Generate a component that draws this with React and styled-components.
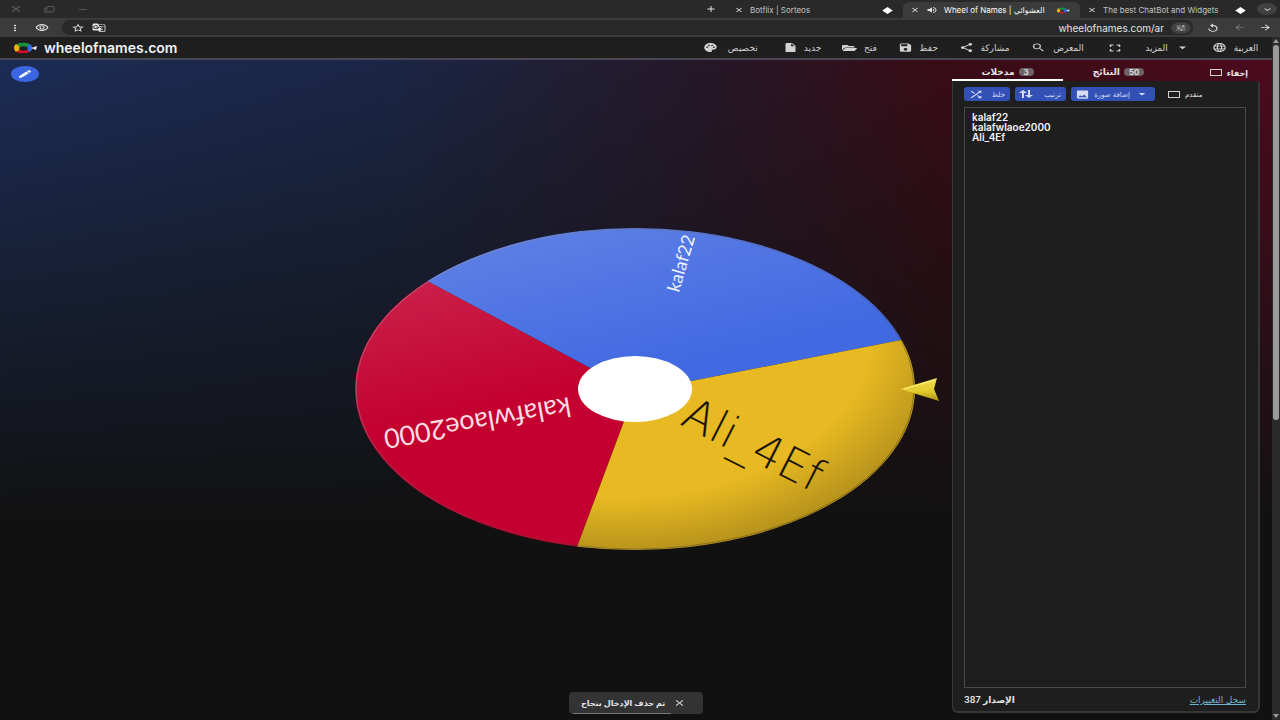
import { useState } from "react";
import styled, { createGlobalStyle } from "styled-components";
import { FaFolderOpen } from "react-icons/fa";
import {
    MdAdd, MdArrowBack, MdArrowDropDown, MdArrowForward, MdClose, MdEdit, MdFullscreen, MdGTranslate,
    MdImage, MdInsertDriveFile, MdKeyboardArrowDown, MdLanguage, MdMoreVert, MdOutlineRemoveRedEye,
    MdPalette, MdReplay, MdSave, MdSearch, MdShare, MdShuffle, MdStarBorder, MdTune,
    MdVolumeUp, MdFilterNone, MdRemove,
} from "react-icons/md";

const menu = [
    { icon: MdPalette, text: "تخصيص", width: 38 },
    { icon: MdInsertDriveFile, text: "جديد", width: 17 },
    { icon: FaFolderOpen, text: "فتح", width: 14 },
    { icon: MdSave, text: "حفظ", width: 17 },
    { icon: MdShare, text: "مشاركة", width: 30 },
    { icon: MdSearch, text: "المعرض", width: 33 },
];

// Alle Icons sind breiter als hoch
function Icon({ as: Shape, w = 15, h = 11 }) {
    return (
        <IconBox $w={w} $h={h}>
            <Shape preserveAspectRatio="none" aria-hidden="true" />
        </IconBox>
    );
}

function Logo({ w = 26, h = 12 }) {
    return (
        <svg width={w} height={h} viewBox="0 0 26 12" preserveAspectRatio="none" aria-hidden="true">
            <path d="M4 2 A12 6 0 0 1 18 2 L15 5 A6 3 0 0 0 8 5Z" fill="#16923f" />
            <path d="M4 2 A8 6 0 0 0 4 10 L8 8 A6 3 0 0 1 8 5Z" fill="#eeb211" />
            <path d="M4 10 A12 6 0 0 0 18 10 L15 8 A6 3 0 0 1 8 8Z" fill="#d50f25" />
            <path d="M18 2 A9 6 0 0 1 18 10 L15 8 A6 3 0 0 0 15 5Z" fill="#3369e8" />
            <path d="M19 6 L25 4 L24 8Z" fill="#dfe8ff" />
        </svg>
    );
}

function Diamond() {
    return (
        <svg width="11" height="7" viewBox="0 0 12 8" aria-hidden="true">
            <path d="M6 0 L12 4 L6 8 L0 4Z" fill="#fff" />
        </svg>
    );
}

function SortArrows() {
    return (
        <svg width="14" height="8" viewBox="0 0 14 8" aria-hidden="true">
            <path d="M4 0 L8 3 H5 V8 H3 V3 H0Z M10 8 L6 5 H9 V0 H11 V5 H14Z" fill="currentColor" />
        </svg>
    );
}

function Wheel() {
    return (
        <WheelSvg viewBox="328 219 616 340" role="img" aria-label="Wheel">
            <defs>
                <clipPath id="disc">
                    <ellipse cx="635" cy="388" rx="280" ry="161" />
                </clipPath>
                <linearGradient id="shine" x1="0.2" y1="0" x2="0.4" y2="0.5">
                    <stop offset="0" stopColor="#fff" stopOpacity="0.16" />
                    <stop offset="1" stopColor="#fff" stopOpacity="0" />
                </linearGradient>
                <radialGradient id="shade" gradientUnits="userSpaceOnUse" cx="0" cy="0" r="1" gradientTransform="translate(620 330) scale(340 225)">
                    <stop offset="0.74" stopColor="#000" stopOpacity="0" />
                    <stop offset="1" stopColor="#000" stopOpacity="0.22" />
                </radialGradient>
                <linearGradient id="rim" x1="0" y1="0.2" x2="1" y2="0.8">
                    <stop offset="0" stopColor="#a5a3b0" stopOpacity="0.6" />
                    <stop offset="0.5" stopColor="#555" stopOpacity="0.3" />
                    <stop offset="1" stopColor="#3a300c" stopOpacity="0.5" />
                </linearGradient>
                <linearGradient id="pin" x1="0" y1="0" x2="0" y2="1">
                    <stop offset="0" stopColor="#f4e04a" />
                    <stop offset="0.6" stopColor="#e2c92b" />
                    <stop offset="1" stopColor="#a88e14" />
                </linearGradient>
            </defs>
            <g clipPath="url(#disc)">
                <path d="M635 391 L901 339 L960 200 L300 200 L429 281Z" fill="#4169e1" />
                <path d="M635 391 L429 281 L300 200 L300 600 L560 600 L577 546Z" fill="#c3002f" />
                <path d="M635 391 L577 546 L560 600 L960 600 L960 327 L901 339Z" fill="#e7b922" />
                <ellipse cx="635" cy="388" rx="280" ry="161" fill="url(#shine)" />
                <path d="M635 391 L577 546 L560 600 L960 600 L960 327 L901 339Z" fill="url(#shade)" />
            </g>
            <ellipse cx="635" cy="388" rx="279" ry="160" fill="none" stroke="url(#rim)" strokeWidth="1" />
            <ellipse cx="635" cy="388" rx="57" ry="33" fill="#fff" />
            <WheelText fontSize="18" fill="#eef2ff" transform="translate(679 292) rotate(-74)">kalaf22</WheelText>
            <WheelText fontSize="27" fill="#ffdbe2" transform="translate(569 396) rotate(170)">kalafwlaoe2000</WheelText>
            <WheelText $light fontSize="45" fill="#1b1408" transform="translate(679 423) rotate(27)">Ali_4Ef</WheelText>
            <path d="M900 388 L937 377 L934 388 L939 400Z" fill="url(#pin)" />
            <path d="M904 388 L935 379" stroke="#fbf08a" fill="none" />
        </WheelSvg>
    );
}

export default function App() {
    const [entries, setEntries] = useState("kalaf22\nkalafwlaoe2000\nAli_4Ef");
    const [toast, setToast] = useState(true);

    return (
        <Window>
            <GlobalStyle />
            <TabStrip>
                <WindowControls>
                    <PlainButton aria-label="Close"><Icon as={MdClose} w={14} h={10} /></PlainButton>
                    <PlainButton aria-label="Restore"><Icon as={MdFilterNone} w={11} h={7} /></PlainButton>
                    <PlainButton aria-label="Minimize"><Icon as={MdRemove} w={14} h={9} /></PlainButton>
                </WindowControls>
                <PlainButton aria-label="New tab"><Icon as={MdAdd} w={12} h={10} /></PlainButton>
                <Tab $width={176} $line>
                    <Icon as={MdClose} w={10} h={8} />
                    <TabTitle>Botflix | Sorteos</TabTitle>
                    <Diamond />
                </Tab>
                <Tab $width={177} $active>
                    <Icon as={MdClose} w={10} h={8} />
                    <Icon as={MdVolumeUp} w={12} h={8} />
                    <TabTitle $active>Wheel of Names | العشوائي</TabTitle>
                    <Logo w={14} h={7} />
                </Tab>
                <Tab $width={176}>
                    <Icon as={MdClose} w={10} h={8} />
                    <TabTitle>The best ChatBot and Widgets</TabTitle>
                    <Diamond />
                </Tab>
                <RoundButton aria-label="Tabs" $end><Icon as={MdKeyboardArrowDown} w={13} h={9} /></RoundButton>
            </TabStrip>
            <BrowserBar>
                <PlainButton aria-label="Menu"><Icon as={MdMoreVert} w={14} h={10} /></PlainButton>
                <PlainButton aria-label="Incognito"><Icon as={MdOutlineRemoveRedEye} w={14} h={11} /></PlainButton>
                <AddressBar>
                    <Icon as={MdStarBorder} w={14} h={10} />
                    <Icon as={MdGTranslate} w={14} h={9} />
                    <Address aria-label="Address" defaultValue="wheelofnames.com/ar" />
                    <RoundButton aria-label="Site settings"><Icon as={MdTune} w={12} h={8} /></RoundButton>
                </AddressBar>
                <PlainButton aria-label="Reload"><Icon as={MdReplay} w={14} h={10} /></PlainButton>
                <PlainButton aria-label="Forward" $dim><Icon as={MdArrowBack} w={13} h={9} /></PlainButton>
                <PlainButton aria-label="Back"><Icon as={MdArrowForward} w={13} h={9} /></PlainButton>
            </BrowserBar>
            <Viewport>
                <Page>
                    <Header>
                        <Brand href="#"><Logo />wheelofnames.com</Brand>
                        <Menu>
                            {menu.map((item) => (
                                <MenuButton key={item.text}>
                                    <Icon as={item.icon} h={item.icon === FaFolderOpen ? 8 : 11} />
                                    <MenuLabel $width={item.width}>{item.text}</MenuLabel>
                                </MenuButton>
                            ))}
                            <MenuButton aria-label="Fullscreen"><Icon as={MdFullscreen} w={18} h={12} /></MenuButton>
                            <MenuButton>
                                <MenuLabel $width={23}>المزيد</MenuLabel>
                                <Icon as={MdArrowDropDown} w={17} h={13} />
                            </MenuButton>
                            <MenuButton>
                                <Icon as={MdLanguage} />
                                <MenuLabel $width={26}>العربية</MenuLabel>
                            </MenuButton>
                        </Menu>
                    </Header>
                    <Main>
                        <EditButton aria-label="Edit"><Icon as={MdEdit} w={16} h={10} /></EditButton>
                        <Wheel />
                        <Side>
                            <PanelTabs>
                                <PanelTab $active>مدخلات<Badge>3</Badge></PanelTab>
                                <PanelTab>النتائج<Badge>50</Badge></PanelTab>
                                <Check $end><input type="checkbox" />إخفاء</Check>
                            </PanelTabs>
                            <Panel>
                                <Actions>
                                    <ActionButton $width={46}><Icon as={MdShuffle} w={16} />خلط</ActionButton>
                                    <ActionButton $width={51}><SortArrows />ترتيب</ActionButton>
                                    <ActionButton $width={84}>
                                        <Icon as={MdImage} />إضافة صورة<Icon as={MdArrowDropDown} w={16} h={12} />
                                    </ActionButton>
                                    <Check $small><input type="checkbox" />متقدم</Check>
                                </Actions>
                                <Entries
                                    aria-label="مدخلات"
                                    spellCheck="false"
                                    value={entries}
                                    onChange={(e) => setEntries(e.target.value)}
                                />
                                <PanelFooter>
                                    <span dir="rtl">الإصدار 387</span>
                                    <ChangeLog href="#">سجل التغييرات</ChangeLog>
                                </PanelFooter>
                            </Panel>
                        </Side>
                        {toast && (
                            <Toast role="status">
                                <ToastText dir="rtl">تم حذف الإدخال بنجاح</ToastText>
                                <PlainButton aria-label="Close" onClick={() => setToast(false)}>
                                    <Icon as={MdClose} w={13} h={10} />
                                </PlainButton>
                            </Toast>
                        )}
                    </Main>
                </Page>
                <ScrollBar aria-hidden="true">
                    <Arrow />
                    <Track><Thumb /></Track>
                    <Arrow $down />
                </ScrollBar>
            </Viewport>
        </Window>
    );
}

const GlobalStyle = createGlobalStyle`
    * {
        box-sizing: border-box;
    }

    body {
        margin: 0;
        background: #111;
        color: #e4e4e4;
        font-family: Inter, "DejaVu Sans", sans-serif;
        font-size: 9px;
    }

    button, input, textarea {
        font: inherit;
        color: inherit;
    }

    button {
        cursor: pointer;
    }

    svg {
        flex: none;
    }
`;

const IconBox = styled.span`
    display: flex;
    flex: none;
    width: ${(props) => props.$w}px;
    height: ${(props) => props.$h}px;

    svg {
        width: 100%;
        height: 100%;
    }
`;

const Window = styled.div`
    display: flex;
    flex-direction: column;
    min-height: 100vh;
`;

const TabStrip = styled.div`
    display: flex;
    align-items: center;
    height: 18px;
    background: #292929;
`;

const WindowControls = styled.div`
    display: flex;
    flex: 1;
    align-items: center;
    gap: 21px;
    padding-left: 9px;
    color: #666;
`;

const PlainButton = styled.button`
    display: flex;
    align-items: center;
    padding: 0;
    border: none;
    background: transparent;
    color: ${(props) => (props.$dim ? "#777" : "inherit")};
`;

const RoundButton = styled(PlainButton)`
    justify-content: center;
    width: 20px;
    height: 12px;
    margin: ${(props) => (props.$end ? "0 3px 0 1px" : "0")};
    border-radius: 50%;
    background: #414141;
`;

const Tab = styled.div`
    display: flex;
    align-items: center;
    gap: 6px;
    width: ${(props) => props.$width}px;
    height: 16px;
    margin-top: 2px;
    margin-left: ${(props) => (props.$line ? "10px" : "0")};
    padding: 0 10px 0 7px;
    border-radius: 6px 6px 0 0;
    background: ${(props) => (props.$active ? "#3b3b3b" : "transparent")};
`;

const TabTitle = styled.span`
    flex: 1;
    white-space: nowrap;
    font-size: 8px;
    font-weight: 400;
    color: ${(props) => (props.$active ? "#fff" : "#c4c4c4")};
`;

const BrowserBar = styled.div`
    display: flex;
    align-items: center;
    gap: 13px;
    height: 19px;
    padding: 0 8px;
    background: #3b3b3b;
`;

const AddressBar = styled.div`
    display: flex;
    flex: 1;
    align-items: center;
    gap: 7px;
    height: 15px;
    padding: 0 2px 0 9px;
    border-radius: 8px;
    background: #282828;
`;

const Address = styled.input`
    flex: 1;
    min-width: 0;
    height: 13px;
    padding: 0;
    border: none;
    background: transparent;
    font-size: 10px;
    text-align: right;
`;

const Viewport = styled.div`
    display: flex;
    flex: 1;
`;

const Page = styled.div`
    display: flex;
    flex: 1;
    flex-direction: column;
`;

const Header = styled.header`
    display: flex;
    align-items: center;
    justify-content: space-between;
    height: 23px;
    padding: 0 13px 0 12px;
    border-bottom: 2px solid #4a4654;
    background: #1f1f1f;
`;

const Brand = styled.a`
    display: flex;
    align-items: center;
    gap: 6px;
    color: #f2f2f2;
    font-size: 14px;
    font-weight: 600;
    text-decoration: none;
`;

const Menu = styled.nav`
    display: flex;
    align-items: center;
    gap: 21px;
`;

const MenuButton = styled(PlainButton)`
    gap: 6px;
    color: #d2d2d2;
`;

const MenuLabel = styled.span`
    min-width: ${(props) => props.$width}px;
    font-size: 9px;
    white-space: nowrap;
`;

const Main = styled.main`
    position: relative;
    display: grid;
    grid-template-columns: 1fr 616px 1fr;
    flex: 1;
    background:
        linear-gradient(to bottom, transparent, #111 70%),
        linear-gradient(to right, #1c2c55, #1b2646 30%, #251828 55%, #380c16 74%, #4d0a1e);
`;

const EditButton = styled(PlainButton)`
    justify-content: center;
    width: 28px;
    height: 16px;
    margin: 6px 0 0 11px;
    border-radius: 50%;
    background: #3a67e0;
    color: #fff;
`;

const WheelSvg = styled.svg`
    width: 100%;
    align-self: center;
`;

const WheelText = styled.text`
    font-family: ${(props) => (props.$light ? '"DejaVu Sans Light", "DejaVu Sans"' : "Lato")}, sans-serif;
    font-weight: ${(props) => (props.$light ? 200 : 400)};
`;

const Side = styled.section`
    display: flex;
    flex-direction: column;
    justify-self: end;
    width: 308px;
    margin: 4px 12px 7px 0;
`;

const PanelTabs = styled.div`
    display: flex;
    height: 17px;
    font-weight: 600;
`;

const PanelTab = styled(PlainButton)`
    justify-content: center;
    gap: 4px;
    width: 111px;
    border-bottom: 2px solid ${(props) => (props.$active ? "#fff" : "transparent")};
    white-space: nowrap;
`;

const Badge = styled.span`
    min-width: 14px;
    padding: 0 5px;
    border-radius: 4px;
    background: #6d6368;
    font-size: 8px;
    line-height: 8px;
`;

const Check = styled.label`
    display: flex;
    align-items: center;
    gap: 5px;
    margin-left: ${(props) => (props.$end ? "auto" : "8px")};
    margin-right: ${(props) => (props.$end ? "12px" : "0")};
    font-size: ${(props) => (props.$small ? "7px" : "8px")};

    input {
        appearance: none;
        width: 12px;
        height: 7px;
        margin: 0;
        border: 1px solid #d0d0d0;
    }
`;

const Panel = styled.div`
    display: flex;
    flex: 1;
    flex-direction: column;
    padding: 6px 12px 4px 11px;
    border: solid #373737;
    border-width: 0 2px 2px 1px;
    border-radius: 0 4px 6px 6px;
    background: #1e1e1e;
`;

const Actions = styled.div`
    display: flex;
    gap: 5px;
    margin-bottom: 6px;
`;

const ActionButton = styled(PlainButton)`
    justify-content: space-between;
    width: ${(props) => props.$width}px;
    height: 14px;
    padding: 0 5px 0 4px;
    border-radius: 3px;
    background: #3351b5;
    color: #d5dcf5;
    font-size: 7px;
    white-space: nowrap;
`;

const Entries = styled.textarea`
    flex: 1;
    width: 100%;
    padding: 4px 7px;
    border: 1px solid #4a4a4a;
    outline: none;
    resize: none;
    background: #1e1e1e;
    color: #f4f4f4;
    font-size: 10px;
    font-weight: 600;
    line-height: 10px;
`;

const PanelFooter = styled.div`
    display: flex;
    align-items: center;
    justify-content: space-between;
    height: 15px;
    margin-top: 4px;
    font-size: 9px;
    font-weight: 600;
`;

const ChangeLog = styled.a`
    color: #6db3cc;
    font-weight: 400;
`;

const Toast = styled.div`
    position: absolute;
    bottom: 6px;
    left: 50%;
    transform: translateX(-50%);
    display: flex;
    align-items: center;
    justify-content: space-between;
    width: 134px;
    height: 22px;
    padding: 0 17px 0 12px;
    border-radius: 4px;
    background: linear-gradient(#777, #777) 4px 100% / 98px 1px no-repeat #333;
`;

const ToastText = styled.span`
    font-size: 8px;
    font-weight: 600;
    white-space: nowrap;
`;

const ScrollBar = styled.div`
    display: flex;
    flex-direction: column;
    align-items: center;
    width: 8px;
    padding: 2px 0;
    background: #2b2b2b;
`;

const Arrow = styled.span`
    border: solid transparent;
    border-width: 0 3px;
    border-top: ${(props) => (props.$down ? "4px solid #9b9b9b" : "0")};
    border-bottom: ${(props) => (props.$down ? "0" : "4px solid #9b9b9b")};
`;

const Track = styled.div`
    flex: 1;
    width: 6px;
    padding-top: 2px;
`;

const Thumb = styled.div`
    height: 56%;
    border-radius: 3px;
    background: #9b9b9b;
`;
